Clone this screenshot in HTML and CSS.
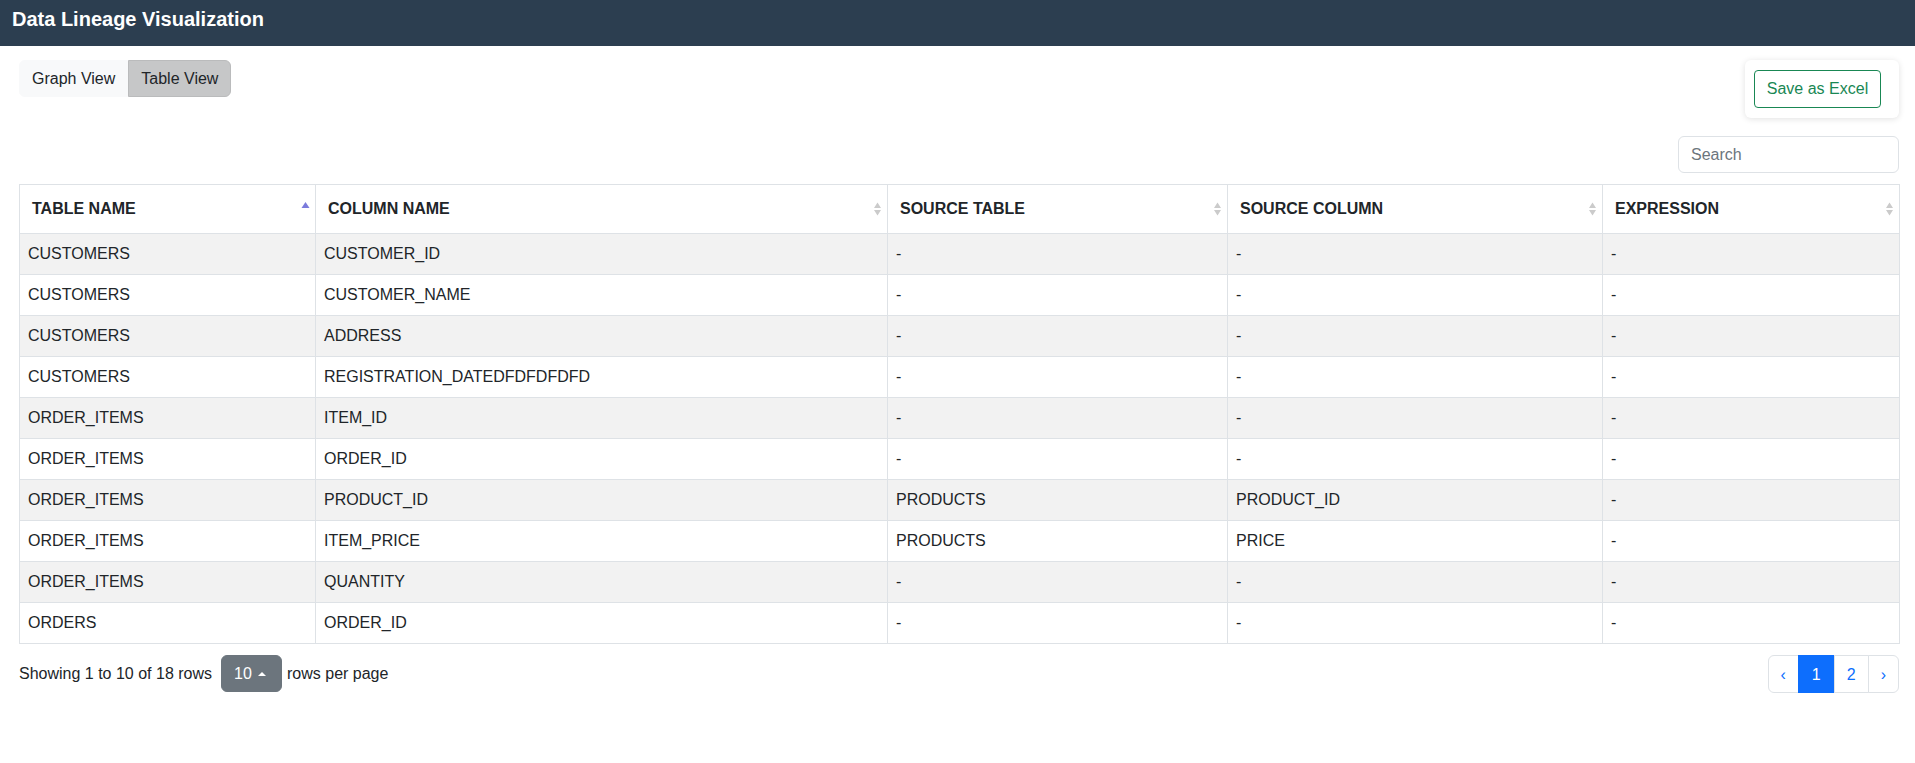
FILE: index.html
```html
<!DOCTYPE html>
<html lang="en">
<head>
<meta charset="utf-8">
<title>Data Lineage Visualization</title>
<link rel="stylesheet" href="styles.css">
</head>
<body>
<header class="topbar"><h1 class="title">Data Lineage Visualization</h1></header>
<main class="content">
  <div class="toolbar">
    <div class="view-toggle">
      <button class="tbtn">Graph View</button>
      <button class="tbtn active">Table View</button>
    </div>
    <div class="export-card"><button class="btn-excel">Save as Excel</button></div>
  </div>
  <div class="search-row"><input class="search" type="text" placeholder="Search"></div>
  <table class="grid">
    <colgroup>
      <col class="c1"><col class="c2"><col class="c3"><col class="c4"><col class="c5">
    </colgroup>
    <thead>
      <tr>
        <th><div class="th-inner"><span>TABLE NAME</span><svg class="sort" width="9" height="18" viewBox="0 0 9 18"><path d="M0.5 8 L4.5 2 L8.5 8 Z" fill="#7b7bdc"/></svg></div></th>
        <th><div class="th-inner"><span>COLUMN NAME</span><svg class="sort" width="9" height="18" viewBox="0 0 9 18"><path d="M1 8 L4.5 2.5 L8 8 Z M1 10 L4.5 15.5 L8 10 Z" fill="#cbcbcb"/></svg></div></th>
        <th><div class="th-inner"><span>SOURCE TABLE</span><svg class="sort" width="9" height="18" viewBox="0 0 9 18"><path d="M1 8 L4.5 2.5 L8 8 Z M1 10 L4.5 15.5 L8 10 Z" fill="#cbcbcb"/></svg></div></th>
        <th><div class="th-inner"><span>SOURCE COLUMN</span><svg class="sort" width="9" height="18" viewBox="0 0 9 18"><path d="M1 8 L4.5 2.5 L8 8 Z M1 10 L4.5 15.5 L8 10 Z" fill="#cbcbcb"/></svg></div></th>
        <th><div class="th-inner"><span>EXPRESSION</span><svg class="sort" width="9" height="18" viewBox="0 0 9 18"><path d="M1 8 L4.5 2.5 L8 8 Z M1 10 L4.5 15.5 L8 10 Z" fill="#cbcbcb"/></svg></div></th>
      </tr>
    </thead>
    <tbody>
      <tr><td>CUSTOMERS</td><td>CUSTOMER_ID</td><td>-</td><td>-</td><td>-</td></tr>
      <tr><td>CUSTOMERS</td><td>CUSTOMER_NAME</td><td>-</td><td>-</td><td>-</td></tr>
      <tr><td>CUSTOMERS</td><td>ADDRESS</td><td>-</td><td>-</td><td>-</td></tr>
      <tr><td>CUSTOMERS</td><td>REGISTRATION_DATEDFDFDFDFD</td><td>-</td><td>-</td><td>-</td></tr>
      <tr><td>ORDER_ITEMS</td><td>ITEM_ID</td><td>-</td><td>-</td><td>-</td></tr>
      <tr><td>ORDER_ITEMS</td><td>ORDER_ID</td><td>-</td><td>-</td><td>-</td></tr>
      <tr><td>ORDER_ITEMS</td><td>PRODUCT_ID</td><td>PRODUCTS</td><td>PRODUCT_ID</td><td>-</td></tr>
      <tr><td>ORDER_ITEMS</td><td>ITEM_PRICE</td><td>PRODUCTS</td><td>PRICE</td><td>-</td></tr>
      <tr><td>ORDER_ITEMS</td><td>QUANTITY</td><td>-</td><td>-</td><td>-</td></tr>
      <tr><td>ORDERS</td><td>ORDER_ID</td><td>-</td><td>-</td><td>-</td></tr>
    </tbody>
  </table>
  <div class="footer">
    <div class="page-detail">
      <span class="info">Showing 1 to 10 of 18 rows</span>
      <button class="page-size">10 <span class="caret"></span></button>
      <span class="per-page">rows per page</span>
    </div>
    <ul class="pager">
      <li class="pitem"><a class="plink">‹</a></li>
      <li class="pitem current"><a class="plink">1</a></li>
      <li class="pitem"><a class="plink">2</a></li>
      <li class="pitem"><a class="plink">›</a></li>
    </ul>
  </div>
</main>
</body>
</html>
```
FILE: styles.css
```css
* { box-sizing: border-box; }
body {
  margin: 0;
  font-family: "Liberation Sans", Arial, sans-serif;
  font-size: 16px;
  color: #212529;
  background: #fff;
}
.topbar {
  background: #2c3e50;
  height: 46px;
  padding: 7px 12px 0;
}
.title {
  margin: 0;
  font-size: 20px;
  line-height: 24px;
  font-weight: bold;
  color: #fff;
}
.content {
  padding: 14px 16px 0 19px;
}
.toolbar {
  display: flex;
  justify-content: space-between;
  align-items: flex-start;
}
.view-toggle {
  display: flex;
}
.tbtn {
  font-family: inherit;
  font-size: 16px;
  line-height: 24px;
  height: 37px;
  padding: 0 12px;
  border: 1px solid #f8f9fa;
  background: #f8f9fa;
  color: #212529;
  margin: 0;
}
.tbtn:first-child { border-radius: 6px 0 0 6px; }
.tbtn:last-child { border-radius: 0 6px 6px 0; }
.tbtn.active {
  background: #c6c7c8;
  border-color: #babbbc;
}
.export-card {
  background: #fff;
  border-radius: 6px;
  box-shadow: 0 1px 6px rgba(0, 0, 0, 0.12);
  padding: 10px 18px 10px 9px;
}
.btn-excel {
  font-family: inherit;
  font-size: 16px;
  line-height: 24px;
  height: 38px;
  width: 127px;
  padding: 0;
  border: 1px solid #198754;
  border-radius: 4px;
  color: #198754;
  background: #fff;
}
.search-row {
  display: flex;
  justify-content: flex-end;
  margin-top: 18px;
}
.search {
  width: 221px;
  height: 37px;
  border: 1px solid #dee2e6;
  border-radius: 6px;
  padding: 0 12px;
  font-family: inherit;
  font-size: 16px;
  color: #212529;
}
.search::placeholder { color: #6c757d; }
.grid {
  margin-top: 11px;
  width: 1880px;
  border-collapse: collapse;
  table-layout: fixed;
  border: 1px solid #dee2e6;
}
.c1 { width: 296px; }
.c2 { width: 572px; }
.c3 { width: 340px; }
.c4 { width: 375px; }
.c5 { width: 297px; }
.grid th, .grid td {
  border: 1px solid #dee2e6;
  text-align: left;
  line-height: 24px;
  font-size: 16px;
}
.grid th {
  padding: 12px 5px 12px 12px;
  font-weight: bold;
  color: #212529;
}
.th-inner {
  display: flex;
  justify-content: space-between;
  align-items: center;
}
.sort { display: block; flex: none; }
.grid td {
  padding: 8px 8px;
  color: #212529;
}
.grid tbody tr:nth-child(odd) td { background: #f2f2f2; }
.footer {
  display: flex;
  justify-content: space-between;
  align-items: flex-start;
  margin-top: 11px;
}
.page-detail {
  display: flex;
  align-items: center;
  height: 37px;
}
.page-size {
  margin: 0 5px 0 9px;
  height: 37px;
  width: 61px;
  border: 1px solid #6c757d;
  border-radius: 6px;
  background: #6c757d;
  color: #fff;
  font-family: inherit;
  font-size: 16px;
  padding: 0 12px;
  display: flex;
  align-items: center;
  gap: 6px;
}
.caret {
  display: inline-block;
  width: 0;
  height: 0;
  border-left: 4px solid transparent;
  border-right: 4px solid transparent;
  border-bottom: 4px solid #fff;
}
.pager {
  display: flex;
  list-style: none;
  margin: 0;
  padding: 0;
}
.plink {
  display: block;
  height: 38px;
  line-height: 24px;
  padding: 7px 12px;
  border: 1px solid #dee2e6;
  margin-left: -1px;
  color: #0d6efd;
  background: #fff;
  font-size: 16px;
}
.pitem:first-child .plink { margin-left: 0; border-radius: 6px 0 0 6px; }
.pitem:last-child .plink { border-radius: 0 6px 6px 0; }
.pitem.current .plink {
  background: #0d6efd;
  border-color: #0d6efd;
  color: #fff;
  padding: 7px 13px;
}
```
